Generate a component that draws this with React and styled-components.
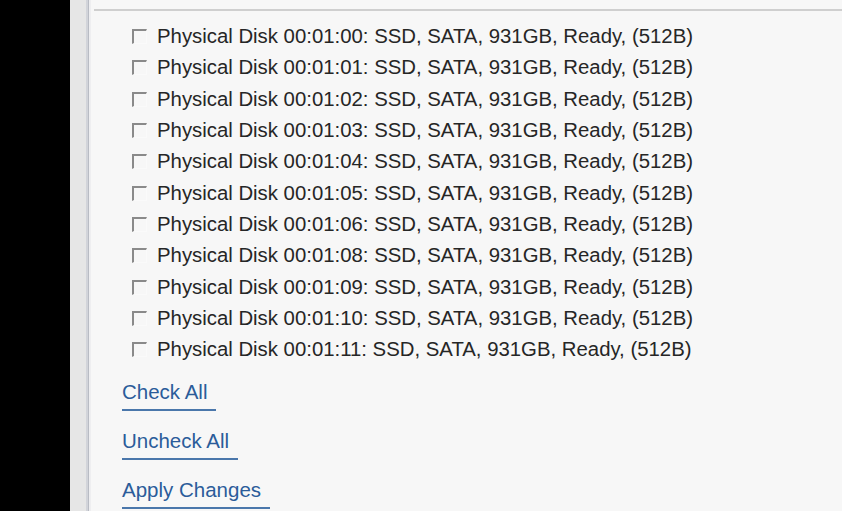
import React from 'react';
import styled, { createGlobalStyle } from 'styled-components';

const disks = ['00', '01', '02', '03', '04', '05', '06', '08', '09', '10', '11'];

const GlobalStyle = createGlobalStyle`
  html, body {
    margin: 0;
    padding: 0;
    background: #f7f7f7;
  }
  body {
    font-family: "Liberation Sans", Arial, sans-serif;
  }
`;

const Page = styled.div`
  display: flex;
  height: 511px;
  overflow: hidden;
`;

const SideBar = styled.div`
  width: 70px;
  flex-shrink: 0;
  background: #000;
`;

const Gutter = styled.div`
  width: 18px;
  flex-shrink: 0;
  background: #e6e6e6;
  border-right: 1px solid #b9bcc4;
  box-shadow: inset -2px 0 0 #d2d4da;
`;

const Panel = styled.div`
  flex: 1;
  background: #f7f7f7;
  border-left: 2px solid #eeeef0;
  padding-left: 3px;
`;

const TopRule = styled.div`
  height: 9px;
  border-bottom: 2px solid #cfcfcf;
`;

const Content = styled.div`
  padding: 10px 0 0 28px;
`;

const DiskList = styled.div`
  display: flex;
  flex-direction: column;
  padding-left: 10px;
`;

const Row = styled.label`
  display: flex;
  align-items: center;
  height: 31.3px;
  font-size: 20.35px;
  color: #262626;
`;

const Box = styled.span`
  width: 12px;
  height: 12px;
  margin-right: 10px;
  border-top: 2px solid #8a8a8a;
  border-left: 2px solid #8a8a8a;
  border-right: 1px solid #fafafa;
  border-bottom: 1px solid #fafafa;
  background: #f7f7f7;
  flex-shrink: 0;
`;

const Links = styled.div`
  display: flex;
  flex-direction: column;
  align-items: flex-start;
  gap: 18px;
  margin-top: 15px;
`;

const ActionLink = styled.a`
  font-size: 20.5px;
  color: #2b5c9a;
  text-decoration: none;
  padding: 0 9px 5px 0;
  border-bottom: 2px solid #4a77ab;
  line-height: 24px;
  cursor: pointer;
`;

export default function App() {
  return (
    <>
      <GlobalStyle />
      <Page>
        <SideBar />
        <Gutter />
        <Panel>
          <TopRule />
          <Content>
            <DiskList>
              {disks.map((d) => (
                <Row key={d}>
                  <Box />
                  Physical Disk 00:01:{d}: SSD, SATA, 931GB, Ready, (512B)
                </Row>
              ))}
            </DiskList>
            <Links>
              <ActionLink>Check All</ActionLink>
              <ActionLink>Uncheck All</ActionLink>
              <ActionLink>Apply Changes</ActionLink>
            </Links>
          </Content>
        </Panel>
      </Page>
    </>
  );
}
